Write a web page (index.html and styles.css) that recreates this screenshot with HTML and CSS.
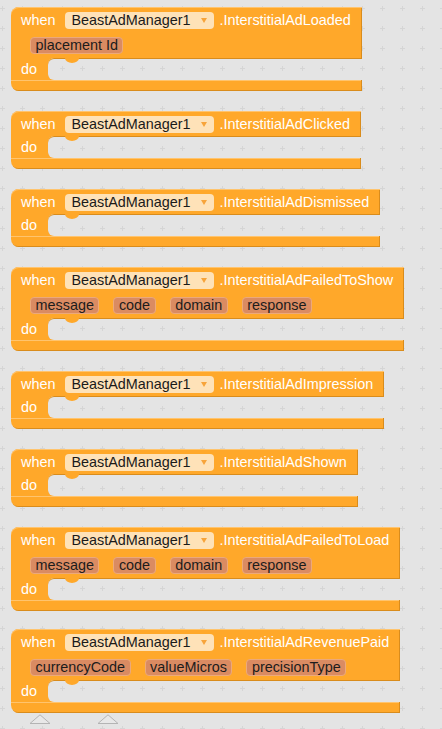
FILE: index.html
```html
<!DOCTYPE html>
<html>
<head>
<meta charset="utf-8">
<link rel="stylesheet" href="styles.css">
</head>
<body>
<div class="canvas">
  <div class="block">
    <div class="top">
      <div class="row head"><span class="kw">when</span><span class="dd"><span>BeastAdManager1</span><span class="arrow"></span></span><span class="ev">.InterstitialAdLoaded</span></div>
      <div class="row params"><span class="param">placement Id</span></div>
    </div>
    <div class="mid"><div class="spine">do</div><div class="hole"></div></div>
    <div class="arm"></div>
  </div>

  <div class="block">
    <div class="top">
      <div class="row head"><span class="kw">when</span><span class="dd"><span>BeastAdManager1</span><span class="arrow"></span></span><span class="ev">.InterstitialAdClicked</span></div>
    </div>
    <div class="mid"><div class="spine">do</div><div class="hole"></div></div>
    <div class="arm"></div>
  </div>

  <div class="block">
    <div class="top">
      <div class="row head"><span class="kw">when</span><span class="dd"><span>BeastAdManager1</span><span class="arrow"></span></span><span class="ev">.InterstitialAdDismissed</span></div>
    </div>
    <div class="mid"><div class="spine">do</div><div class="hole"></div></div>
    <div class="arm"></div>
  </div>

  <div class="block">
    <div class="top">
      <div class="row head"><span class="kw">when</span><span class="dd"><span>BeastAdManager1</span><span class="arrow"></span></span><span class="ev">.InterstitialAdFailedToShow</span></div>
      <div class="row params"><span class="param">message</span><span class="param">code</span><span class="param">domain</span><span class="param">response</span></div>
    </div>
    <div class="mid"><div class="spine">do</div><div class="hole"></div></div>
    <div class="arm"></div>
  </div>

  <div class="block">
    <div class="top">
      <div class="row head"><span class="kw">when</span><span class="dd"><span>BeastAdManager1</span><span class="arrow"></span></span><span class="ev">.InterstitialAdImpression</span></div>
    </div>
    <div class="mid"><div class="spine">do</div><div class="hole"></div></div>
    <div class="arm"></div>
  </div>

  <div class="block">
    <div class="top">
      <div class="row head"><span class="kw">when</span><span class="dd"><span>BeastAdManager1</span><span class="arrow"></span></span><span class="ev">.InterstitialAdShown</span></div>
    </div>
    <div class="mid"><div class="spine">do</div><div class="hole"></div></div>
    <div class="arm"></div>
  </div>

  <div class="block">
    <div class="top">
      <div class="row head"><span class="kw">when</span><span class="dd"><span>BeastAdManager1</span><span class="arrow"></span></span><span class="ev">.InterstitialAdFailedToLoad</span></div>
      <div class="row params"><span class="param">message</span><span class="param">code</span><span class="param">domain</span><span class="param">response</span></div>
    </div>
    <div class="mid"><div class="spine">do</div><div class="hole"></div></div>
    <div class="arm"></div>
  </div>

  <div class="block last">
    <div class="top">
      <div class="row head"><span class="kw">when</span><span class="dd"><span>BeastAdManager1</span><span class="arrow"></span></span><span class="ev">.InterstitialAdRevenuePaid</span></div>
      <div class="row params"><span class="param">currencyCode</span><span class="param">valueMicros</span><span class="param">precisionType</span></div>
    </div>
    <div class="mid"><div class="spine">do</div><div class="hole"></div></div>
    <div class="arm"></div>
  </div>

  <div class="peeks">
    <svg class="peek" width="22" height="10" viewBox="0 0 22 10"><polygon points="1,9.5 11,0.8 21,9.5" /></svg>
    <svg class="peek" width="22" height="10" viewBox="0 0 22 10"><polygon points="1,9.5 11,0.8 21,9.5" /></svg>
  </div>
</div>
</body>
</html>
```

FILE: styles.css
```css
html, body {
  margin: 0;
  padding: 0;
  height: 100%;
  overflow: hidden;
}

html, body, .hole {
  background-color: #e4e4e4;
  background-image:
    conic-gradient(at 5px 1px, transparent 75%, #d5d5d5 0),
    conic-gradient(at 1px 5px, transparent 75%, #d5d5d5 0);
  background-size: 20px 20px, 20px 20px;
  background-position: 0 8px, 2px 6px;
  background-attachment: fixed;
}

.canvas {
  display: flex;
  flex-direction: column;
  align-items: flex-start;
  gap: 20px;
  padding: 7px 0 0 11px;
  font-family: "Liberation Sans", Arial, sans-serif;
  font-size: 14.4px;
}

.block {
  display: flex;
  flex-direction: column;
}

.block.last {
  margin-top: -2px;
}

.top {
  background: #ffa82a;
  border-top-left-radius: 8px;
  box-shadow: inset 0 1px 0 #ffc46e, inset -1px 0 0 #d98c1c;
}

.row {
  display: flex;
  align-items: center;
  white-space: nowrap;
}

.head {
  height: 25px;
  padding: 0 11px 0 10px;
}

.kw {
  color: #fff;
  margin-right: 10px;
}

.ev {
  color: #fff;
  margin-left: 6px;
}

.dd {
  display: flex;
  align-items: center;
  gap: 10px;
  height: 17px;
  margin-top: 1px;
  padding: 0 7px 0 6px;
  border-radius: 4px;
  background: #fee2b8;
  color: #1a1a1a;
}

.arrow {
  width: 0;
  height: 0;
  border-left: 3.5px solid transparent;
  border-right: 3.5px solid transparent;
  border-top: 5px solid #f7a43a;
}

.params {
  height: 26px;
  padding-left: 19px;
  gap: 14px;
}

.param {
  display: flex;
  align-items: center;
  height: 15px;
  padding: 0 4.5px;
  border: 1px solid #eca97b;
  border-radius: 4px;
  background: #da8b62;
  color: #1c1c1c;
}

.mid {
  display: flex;
  height: 22px;
  background: linear-gradient(to right, #ffa82a 45px, transparent 45px);
}

.spine {
  width: 27px;
  padding-left: 10px;
  display: flex;
  align-items: center;
  color: #fff;
  background: #ffa82a;
}

.hole {
  flex: 1;
  position: relative;
  border-radius: 6px 0 0 6px;
  box-shadow: inset 0 1px 0 #d98c1c;
}

.hole::before {
  content: "";
  position: absolute;
  left: 17px;
  top: 0;
  width: 14px;
  height: 5px;
  background: #ffa82a;
  border-radius: 0 0 7px 7px / 0 0 5px 5px;
}

.arm {
  height: 11px;
  background: #ffa82a;
  border-bottom-left-radius: 8px;
  box-shadow: inset -1px -1px 0 #d98c1c, inset 0 1px 0 #ffc46e;
}

.peeks {
  display: flex;
  gap: 46px;
  margin-top: -19px;
  padding-left: 18px;
}

.peek polygon {
  fill: #e8e8e8;
  stroke: #b4b4b4;
  stroke-width: 1;
}
```
